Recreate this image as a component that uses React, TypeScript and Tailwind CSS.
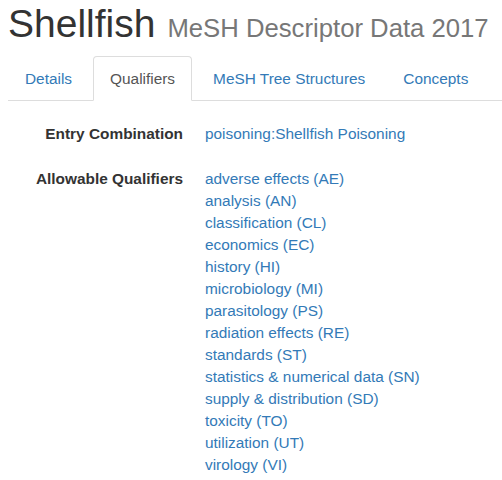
import React from "react";

const tabs = ["Details", "Qualifiers", "MeSH Tree Structures", "Concepts"];

const qualifiers = [
  "adverse effects (AE)",
  "analysis (AN)",
  "classification (CL)",
  "economics (EC)",
  "history (HI)",
  "microbiology (MI)",
  "parasitology (PS)",
  "radiation effects (RE)",
  "standards (ST)",
  "statistics & numerical data (SN)",
  "supply & distribution (SD)",
  "toxicity (TO)",
  "utilization (UT)",
  "virology (VI)",
];

export default function App() {
  return (
    <div className="w-[502px] h-[480px] bg-white pl-2 overflow-hidden font-['Liberation_Sans',Arial,sans-serif] text-[15.4px] leading-[22px] text-[#333]">
      <div className="flex items-baseline mt-1 h-[39px] leading-[39px] whitespace-nowrap">
        <span className="text-[39px] text-[#333]">Shellfish</span>
        <span className="ml-[12px] text-[25.7px] text-[#777]">MeSH Descriptor Data 2017</span>
      </div>

      <ul className="flex mt-[13px] border-b border-[#ddd]">
        {tabs.map((t) => {
          const active = t === "Qualifiers";
          return (
            <li key={t} className="mr-[4px] -mb-px">
              <a
                href="#"
                className={
                  active
                    ? "block h-[45px] px-[16px] leading-[44px] text-[#555] bg-white border border-[#ddd] border-b-transparent rounded-t-[4px]"
                    : "block h-[45px] px-[16px] leading-[44px] text-[#337ab7] border border-transparent"
                }
              >
                {t}
              </a>
            </li>
          );
        })}
      </ul>

      <div className="pt-[22px]">
        <div className="flex">
          <div className="w-[175px] text-right font-bold">Entry Combination</div>
          <div className="ml-[22px] text-[#337ab7]">poisoning:Shellfish Poisoning</div>
        </div>
        <div className="flex mt-[23px]">
          <div className="w-[175px] text-right font-bold">Allowable Qualifiers</div>
          <ul className="ml-[22px] text-[#337ab7]">
            {qualifiers.map((q) => (
              <li key={q}>
                <a href="#">{q}</a>
              </li>
            ))}
          </ul>
        </div>
      </div>
    </div>
  );
}
